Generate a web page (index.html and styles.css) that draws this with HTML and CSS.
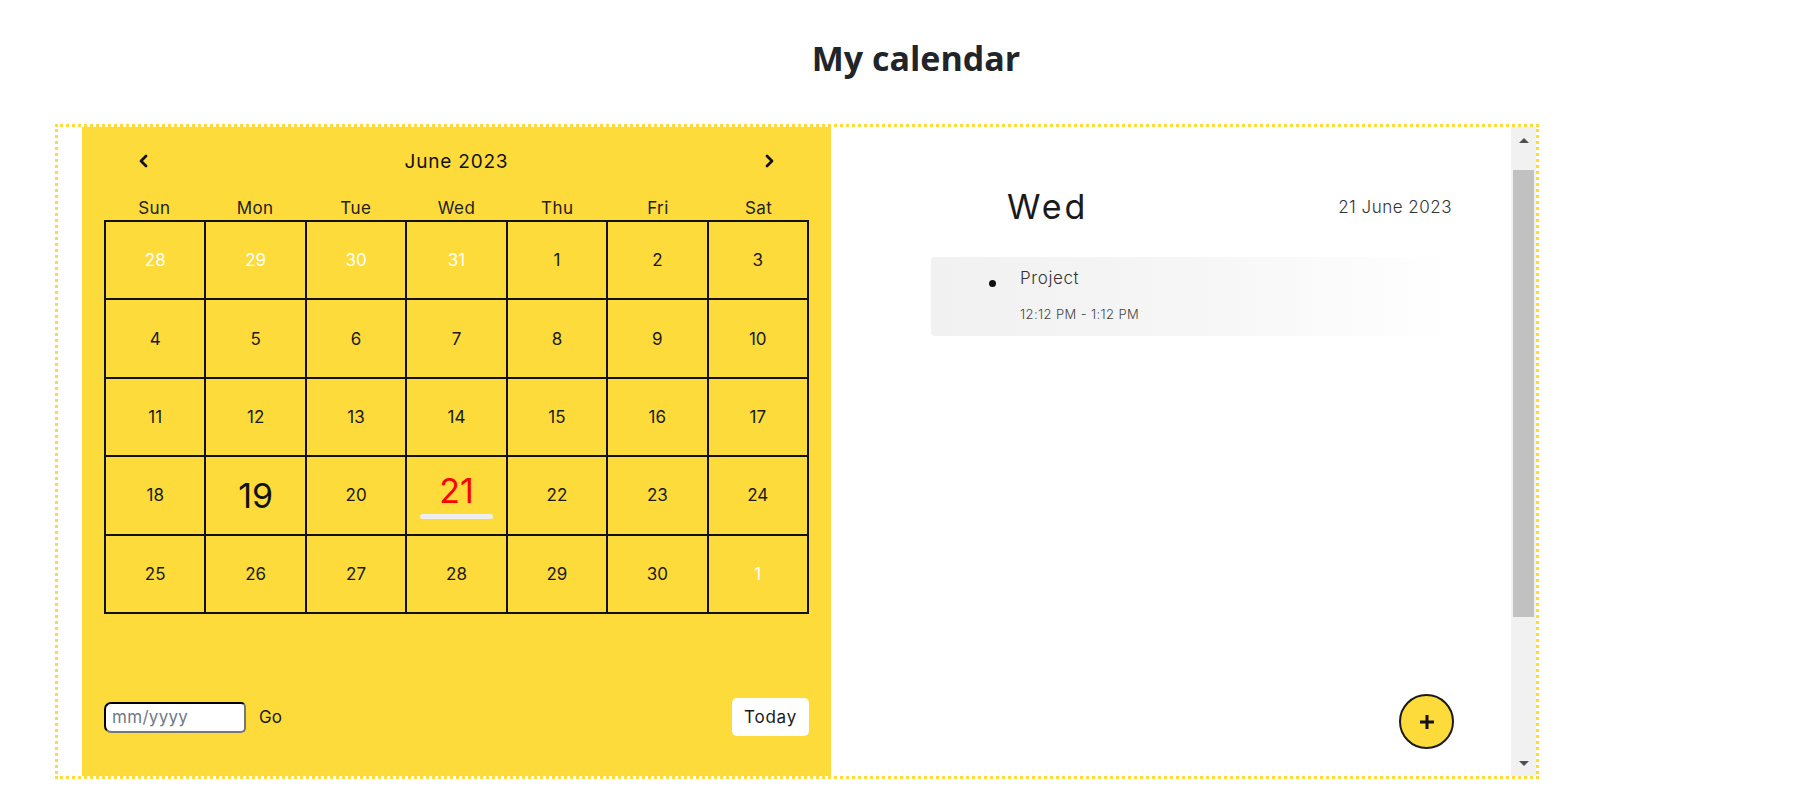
FILE: index.html
```html
<!DOCTYPE html>
<html lang="en">
<head>
<meta charset="utf-8">
<title>My calendar</title>
<link rel="stylesheet" href="styles.css">
</head>
<body>
<header class="page-head"><h1 class="title">My calendar</h1></header>
<main class="frame">
  <section class="cal">
    <div class="cal-head">
      <span class="nav"><svg width="12" height="14" viewBox="0 0 12 14"><polyline points="8,2 3,7 8,12" fill="none" stroke="#111" stroke-width="2.8" stroke-linecap="round" stroke-linejoin="round"/></svg></span>
      <span class="month">June 2023</span>
      <span class="nav"><svg width="12" height="14" viewBox="0 0 12 14"><polyline points="4,2 9,7 4,12" fill="none" stroke="#111" stroke-width="2.8" stroke-linecap="round" stroke-linejoin="round"/></svg></span>
    </div>
    <div class="weekdays">
      <span>Sun</span><span>Mon</span><span>Tue</span><span>Wed</span><span>Thu</span><span>Fri</span><span>Sat</span>
    </div>
    <div class="grid">
      <div class="cell other">28</div><div class="cell other">29</div><div class="cell other">30</div><div class="cell other">31</div><div class="cell">1</div><div class="cell">2</div><div class="cell">3</div>
      <div class="cell">4</div><div class="cell">5</div><div class="cell">6</div><div class="cell">7</div><div class="cell">8</div><div class="cell">9</div><div class="cell">10</div>
      <div class="cell">11</div><div class="cell">12</div><div class="cell">13</div><div class="cell">14</div><div class="cell">15</div><div class="cell">16</div><div class="cell">17</div>
      <div class="cell">18</div><div class="cell big">19</div><div class="cell">20</div><div class="cell today"><span class="today-num">21</span><span class="today-bar"></span></div><div class="cell">22</div><div class="cell">23</div><div class="cell">24</div>
      <div class="cell">25</div><div class="cell">26</div><div class="cell">27</div><div class="cell">28</div><div class="cell">29</div><div class="cell">30</div><div class="cell other">1</div>
    </div>
    <div class="controls">
      <div class="goto">
        <input class="date-input" type="text" placeholder="mm/yyyy">
        <span class="go">Go</span>
      </div>
      <button class="today-btn">Today</button>
    </div>
  </section>
  <section class="day">
    <div class="day-head">
      <span class="day-name">Wed</span>
      <span class="day-date">21 June 2023</span>
    </div>
    <div class="event">
      <span class="dot"></span>
      <div class="event-text">
        <div class="event-title">Project</div>
        <div class="event-time">12:12 PM - 1:12 PM</div>
      </div>
    </div>
    <button class="add-btn"><svg width="18" height="18" viewBox="0 0 18 18"><path d="M9 2v14M2 9h14" stroke="#111" stroke-width="3"/></svg></button>
  </section>
  <div class="scrollbar">
    <div class="sb-btn"><span class="tri-up"></span></div>
    <div class="sb-track"><div class="sb-thumb"></div></div>
    <div class="sb-btn"><span class="tri-down"></span></div>
  </div>
</main>
</body>
</html>
```
FILE: styles.css
```css
* { box-sizing: border-box; }
body {
  margin: 0;
  background: #fff;
  font-family: Inter, "Noto Sans", sans-serif;
  color: #222;
}
.page-head {
  padding-left: 28px;
  text-align: center;
}
.title {
  margin: 36px 0 44px;
  font-family: "Open Sans", Lato, "Liberation Sans", sans-serif;
  font-weight: 700;
  font-size: 34px;
  line-height: 44px;
  color: #212529;
}
.frame {
  margin-left: 55px;
  width: 1484px;
  height: 655px;
  border: 3px dotted #fddb3a;
  padding-left: 24px;
  display: flex;
}
.cal {
  width: 749px;
  background: #fddb3a;
  padding: 12px 22px 40px;
  display: flex;
  flex-direction: column;
}
.cal-head {
  height: 44px;
  display: flex;
  align-items: center;
  justify-content: space-between;
  padding: 0 34px 0 34px;
}
.nav { display: flex; align-items: center; }
.month {
  font-size: 19px;
  letter-spacing: 0.8px;
  color: #111;
}
.weekdays {
  margin-top: 13px;
  height: 24px;
  display: grid;
  grid-template-columns: repeat(7, 1fr);
  font-size: 17px;
  letter-spacing: 0.4px;
  line-height: 24px;
  text-align: center;
  color: #222;
}
.grid {
  display: grid;
  grid-template-columns: repeat(7, 1fr);
  grid-template-rows: repeat(5, 78.4px);
  border: 1px solid #111;
}
.cell {
  border: 1px solid #111;
  display: flex;
  flex-direction: column;
  align-items: center;
  justify-content: center;
  font-size: 17px;
  color: #1a1a1a;
}
.cell.other { color: #fff; }
.cell.big { font-size: 34px; color: #111; }
.today-num {
  font-size: 34px;
  line-height: 38px;
  color: #ff0000;
}
.today-bar {
  margin-top: 4px;
  width: 73px;
  height: 5px;
  border-radius: 3px;
  background: #eeeeee;
}
.controls {
  margin-top: auto;
  height: 38px;
  display: flex;
  align-items: center;
  justify-content: space-between;
}
.goto { display: flex; align-items: center; }
.date-input {
  width: 142px;
  height: 31px;
  border-style: solid;
  border-width: 2px;
  border-color: #000 #767676 #767676 #000;
  border-radius: 7px 5px 5px 7px;
  padding: 0 6px;
  font-family: Inter, sans-serif;
  font-size: 17px;
  letter-spacing: 0.3px;
  background: #fff;
}
.date-input::placeholder { color: #6f7a88; }
.go {
  margin-left: 13px;
  font-size: 17px;
  color: #1a1a1a;
}
.today-btn {
  width: 77px;
  height: 38px;
  border: none;
  border-radius: 5px;
  background: #fff;
  font-family: Inter, sans-serif;
  font-size: 17px;
  letter-spacing: 0.8px;
  color: #1a1a1a;
  padding: 0;
}
.day {
  width: 680px;
  padding: 60px 59px 27px 100px;
  display: flex;
  flex-direction: column;
}
.day-head {
  height: 40px;
  display: flex;
  align-items: center;
  justify-content: space-between;
  padding-left: 76px;
}
.day-name {
  font-size: 34px;
  line-height: 40px;
  letter-spacing: 3px;
  font-weight: 400;
  color: #1a1a1a;
}
.day-date {
  font-size: 17px;
  letter-spacing: 0.5px;
  font-weight: 300;
  color: #333;
}
.event {
  margin-top: 30px;
  height: 79px;
  border-radius: 4px;
  background: linear-gradient(to right, #f1f1f1 0%, #f6f6f6 50%, #ffffff 100%);
  display: flex;
  align-items: flex-start;
  padding: 12px 0 0 58px;
}
.dot {
  width: 7px;
  height: 7px;
  border-radius: 50%;
  background: #111;
  margin-top: 11px;
}
.event-text { margin-left: 24px; }
.event-title {
  font-size: 17px;
  line-height: 18px;
  letter-spacing: 0.6px;
  font-weight: 300;
  color: #333;
}
.event-time {
  margin-top: 19px;
  font-size: 13px;
  line-height: 16px;
  letter-spacing: 0.4px;
  font-weight: 300;
  color: #444;
}
.add-btn {
  margin-top: auto;
  align-self: flex-end;
  margin-right: -2px;
  width: 55px;
  height: 55px;
  border-radius: 50%;
  border: 2px solid #1a1a1a;
  background: #fddb3a;
  display: flex;
  align-items: center;
  justify-content: center;
  padding: 0;
}
.scrollbar {
  width: 25px;
  background: #f1f1f1;
  display: flex;
  flex-direction: column;
}
.sb-btn {
  height: 26px;
  display: flex;
  align-items: center;
  justify-content: center;
}
.tri-up, .tri-down {
  width: 0;
  height: 0;
  border-left: 5px solid transparent;
  border-right: 5px solid transparent;
}
.tri-up { border-bottom: 5px solid #505050; }
.tri-down { border-top: 5px solid #505050; }
.sb-track {
  flex: 1;
  padding: 17px 2px 0;
}
.sb-thumb {
  height: 447px;
  background: #c1c1c1;
}
```
